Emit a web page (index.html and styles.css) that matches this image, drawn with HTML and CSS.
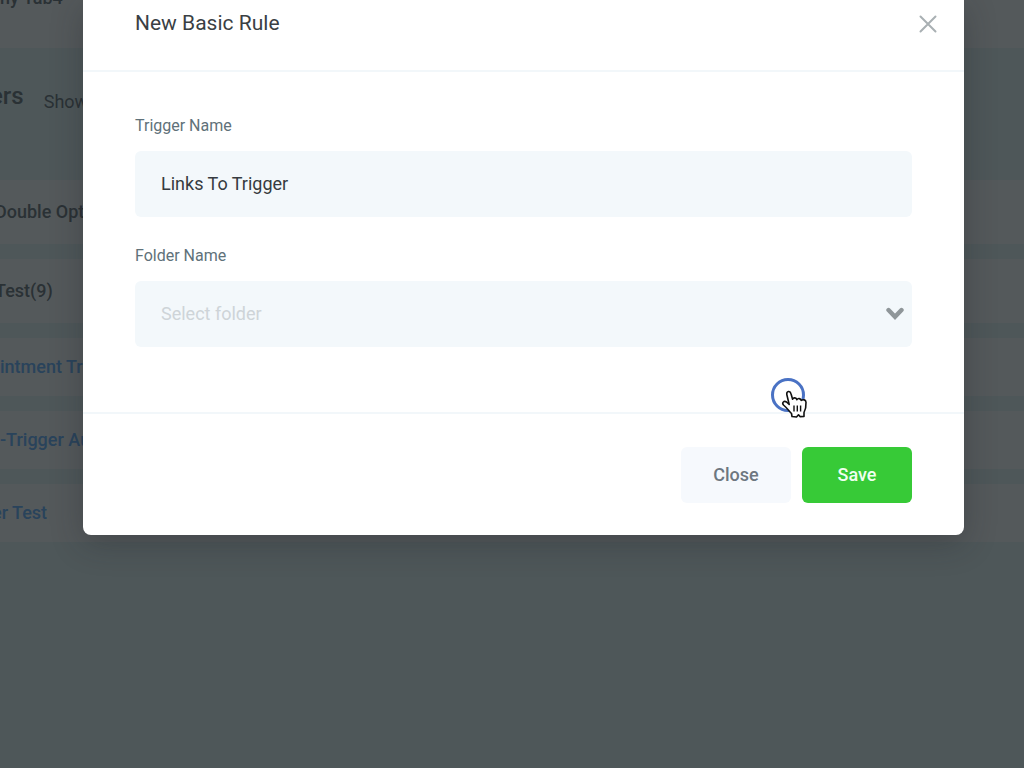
FILE: index.html
```html
<!DOCTYPE html>
<html lang="en">
<head>
    <title>Triggers - New Basic Rule</title>
    <meta charset="utf-8">
    <link rel="stylesheet" href="styles.css">
</head>
<body>
<div class="page">
    <div class="top-bar"><span class="account">ny Tab4</span></div>
    <div class="page-header">
        <h1 class="page-title">ers</h1>
        <span class="page-count">Showing</span>
    </div>
    <div class="rows">
        <div class="row">Double Opt</div>
        <div class="row">Test(9)</div>
        <a class="row row-link" href="#">intment Tr</a>
        <a class="row row-link" href="#">-Trigger Au</a>
        <a class="row row-link row-test" href="#">er Test</a>
    </div>
</div>

<!-- Modal -->
<div class="overlay">
    <form class="modal">
        <div class="modal-header">
            <h2 class="modal-title">New Basic Rule</h2>
            <button class="modal-x" type="button" aria-label="Dismiss">
                <svg width="18" height="18" viewBox="0 0 18 18"><path d="M1.5 1.5L16.5 16.5M16.5 1.5L1.5 16.5" fill="none" stroke="#a9b0b3" stroke-width="2" stroke-linecap="round"/></svg>
            </button>
        </div>
        <div class="modal-body">
            <label class="label" for="trigger-name">Trigger Name</label>
            <input class="field" id="trigger-name" type="text" value="Links To Trigger">
            <label class="label" for="folder-name">Folder Name</label>
            <div class="select-wrap">
                <select class="field select" id="folder-name">
                    <option>Select folder</option>
                </select>
                <svg class="chevron" width="18" height="14" viewBox="0 0 18 14"><path d="M2.5 3L9 9.8L15.5 3" fill="none" stroke="#8f9699" stroke-width="4.4" stroke-linecap="round"/></svg>
            </div>
        </div>
        <div class="modal-footer">
            <button class="button" type="button">Close</button>
            <button class="button button-save" type="button">Save</button>
            <svg class="pointer" width="38" height="42" viewBox="0 0 38 42">
                <circle cx="18" cy="18" r="15.5" fill="none" stroke="#4a72c4" stroke-width="3"/>
                <path d="M22 39.500L21.500 36.500C19 34 16.500 30.500 13.500 28C11.500 25.500 14 23.500 16.500 25L19.200 27.500L16.800 17.500C16.400 14 20.200 13.400 21 16.800L22.600 22.300C23.400 20.200 26.300 20.400 26.900 22.700C28 20.900 30.700 21.300 31.200 23.400C33 22 35.800 22.800 36 25.200C36.200 29 35.800 32 34 35.500V39.500L30 39.600L28.500 37.800L26.500 40Z" fill="#fff" stroke="#111" stroke-width="1.600" stroke-linejoin="round"/>
                <path d="M24 28.500V34.500M27.300 28.500V34.500M30.600 28.500V34.500" stroke="#111" stroke-width="1.400"/>
            </svg>
        </div>
    </form>
</div>
</body>
</html>
```

FILE: styles.css
```css
html, body {margin: 0; height: 100%; overflow: hidden;}
body, input, select, button {
    font-family: Roboto, sans-serif;
}
.page{
    min-height: 100%;
    background: #eaf8f8;
    color: #747a80;
}
.top-bar{
    display: flex;
    align-items: flex-end;
    height: 48px;
    background: white;
}
.account{
    font-size: 18px;
    font-weight: 500;
    line-height: 20px;
    margin-bottom: 40px;
}
.page-header{
    display: flex;
    align-items: flex-end;
    gap: 20px;
    height: 66px;
    padding-bottom: 66px;
    margin-left: -10px;
}
.page-title{
    margin: 0;
    font-size: 24px;
    font-weight: 500;
    line-height: 36px;
}
.page-count{
    font-size: 18px;
    line-height: 24px;
}
.rows{
    display: flex;
    flex-direction: column;
    gap: 15px;
}
.row{
    display: flex;
    align-items: center;
    box-sizing: border-box;
    height: 64px;
    padding-bottom: 2px;
    background: white;
    color: #747a80;
    font-size: 18px;
    font-weight: 500;
    text-indent: -5px;
    text-decoration: none;
}
.row-link{
    height: 58px;
    color: #70b4ff;
    text-indent: 0;
}
.row-test{
    text-indent: -8px;
}

/* Modal */
.overlay{
    position: absolute;
    z-index: 1;
    top: 0;
    left: 0;
    right: 0;
    bottom: 0;
    background: rgba(12, 18, 22, 0.7);
}
.modal{
    margin: 0 60px 0 83px;
    background: white;
    border-radius: 0 0 8px 8px;
    box-shadow: 0 8px 32px rgba(30, 30, 35, 0.3);
}
.modal-header{
    display: flex;
    justify-content: space-between;
    padding: 8px 24px 32px 52px;
    border-bottom: 2px solid #f2f7fa;
}
.modal-title{
    margin: 0;
    color: #3a3f44;
    font-size: 21px;
    font-weight: 400;
    line-height: 30px;
}
.modal-x{
    display: flex;
    align-items: center;
    padding: 2px 3px 0;
    border: none;
    background: none;
}
.modal-body{
    padding: 43px 52px 65px;
}
.label{
    display: block;
    margin-bottom: 14px;
    color: #607179;
    font-size: 16px;
    line-height: 22px;
}
.field{
    display: block;
    box-sizing: border-box;
    width: 100%;
    height: 66px;
    padding: 0 26px 2px;
    border: none;
    border-radius: 6px;
    background: #f3f8fb;
    color: #363b40;
    font-size: 18px;
}
.field + .label{
    margin-top: 28px;
}
.select-wrap{
    position: relative;
}
.select{
    appearance: none;
    color: #ced4d8;
}
.chevron{
    position: absolute;
    right: 8px;
    top: 26px;
    pointer-events: none;
}
.modal-footer{
    position: relative;
    display: flex;
    justify-content: flex-end;
    gap: 11px;
    padding: 33px 52px 32px;
    border-top: 2px solid #f2f7fa;
}
.button{
    width: 110px;
    height: 56px;
    padding-bottom: 2px;
    border: none;
    border-radius: 6px;
    background: #f6f9fd;
    color: #6d7780;
    font-size: 18px;
    font-weight: 500;
}
.button-save{
    background: #37ca37;
    color: #effff0;
}
.pointer{
    position: absolute;
    top: -37px;
    right: 156px;
}
```
